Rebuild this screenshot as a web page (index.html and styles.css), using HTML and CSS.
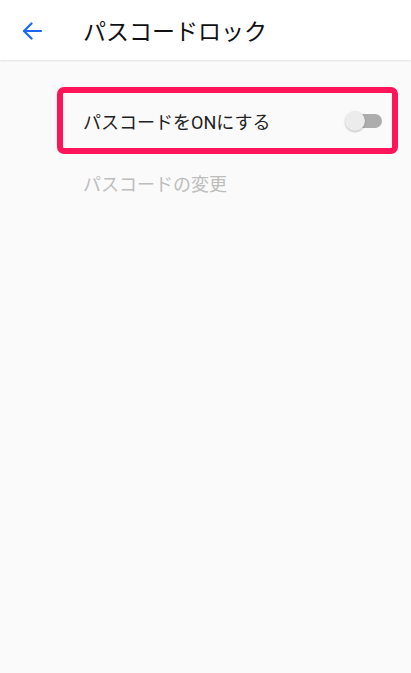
FILE: index.html
```html
<!DOCTYPE html>
<html lang="ja">
<head>
<meta charset="utf-8">
<link rel="stylesheet" href="styles.css">
</head>
<body>
<header class="appbar">
  <span class="back">
    <svg width="20" height="20" viewBox="0 0 20 20"><path d="M19 10H2.5M9.5 2.5L2 10l7.5 7.5" fill="none" stroke="#1a66f5" stroke-width="2.2" stroke-linecap="round" stroke-linejoin="round"/></svg>
  </span>
  <h1 class="title">パスコードロック</h1>
</header>
<main class="content">
  <div class="highlight">
    <div class="row">
      <span class="label">パスコードをONにする</span>
      <span class="switch"><span class="track"></span><span class="thumb"></span></span>
    </div>
  </div>
  <div class="row2"><span class="label disabled">パスコードの変更</span></div>
</main>
</body>
</html>
```
FILE: styles.css
```css
html, body { margin: 0; padding: 0; }
body {
  background: #fafafa;
  font-family: Roboto, "Noto Sans CJK JP", sans-serif;
  height: 673px;
  overflow: hidden;
}
.appbar {
  height: 60px;
  background: #fff;
  display: flex;
  align-items: center;
  box-shadow: 0 1px 2px rgba(0,0,0,0.10);
  position: relative;
}
.back { display: flex; margin-left: 22px; margin-top: 1px; }
.title {
  margin: 0 0 0 41px;
  font-size: 23px;
  font-weight: 400;
  color: #111;
}
.content { padding: 27px 13px 0 57px; }
.highlight {
  border: 6px solid #fe1458;
  border-radius: 7px;
  height: 55px;
  display: flex;
  align-items: center;
}
.row {
  flex: 1;
  display: flex;
  align-items: center;
  justify-content: space-between;
  padding: 0 10px 0 20px;
}
.label { font-size: 18px; color: #222; }
.label.disabled { color: #bdbdbd; }
.switch { position: relative; width: 37px; height: 20px; display: block; }
.track {
  position: absolute; left: 5px; right: 0; top: 3px; height: 14px;
  background: #adadad; border-radius: 7px;
}
.thumb {
  position: absolute; left: 0; top: 0; width: 20px; height: 20px;
  border-radius: 50%; background: #ececec;
  box-shadow: 0 1px 2px rgba(0,0,0,0.25);
}
.row2 { height: 57px; display: flex; align-items: center; padding-left: 26px; }
```
